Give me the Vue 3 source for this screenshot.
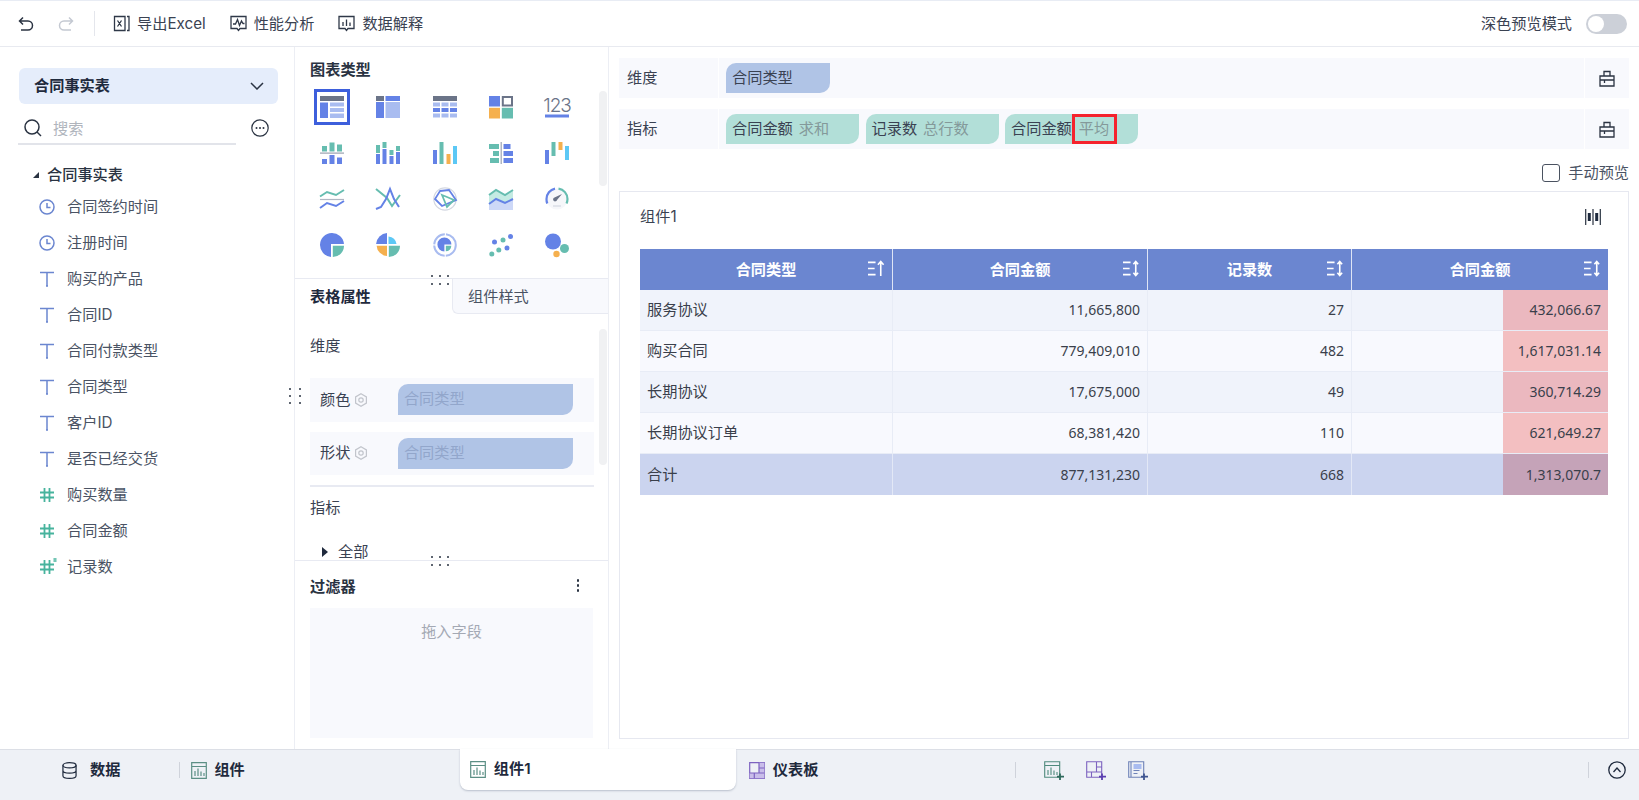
<script setup>
const fields = [
  { type: 'time', name: '合同签约时间' },
  { type: 'time', name: '注册时间' },
  { type: 'text', name: '购买的产品' },
  { type: 'text', name: '合同ID' },
  { type: 'text', name: '合同付款类型' },
  { type: 'text', name: '合同类型' },
  { type: 'text', name: '客户ID' },
  { type: 'text', name: '是否已经交货' },
  { type: 'num', name: '购买数量' },
  { type: 'num', name: '合同金额' },
  { type: 'calc', name: '记录数' }
]

const columns = [
  { name: '合同类型', sort: 'up' },
  { name: '合同金额', sort: 'both' },
  { name: '记录数', sort: 'both' },
  { name: '合同金额', sort: 'both' }
]

const rows = [
  ['服务协议', '11,665,800', '27', '432,066.67'],
  ['购买合同', '779,409,010', '482', '1,617,031.14'],
  ['长期协议', '17,675,000', '49', '360,714.29'],
  ['长期协议订单', '68,381,420', '110', '621,649.27']
]
const total = ['合计', '877,131,230', '668', '1,313,070.7']
</script>

<template>
  <div class="app">
    <header class="topbar">
      <svg class="ic16 undo" viewBox="0 0 16 16"><path d="M5 1.5 1.5 5 5 8.5M2 5h8a4.5 4.5 0 0 1 0 9H3" /></svg>
      <svg class="ic16 redo" viewBox="0 0 16 16"><path d="M11 1.5 14.5 5 11 8.5M14 5H6a4.5 4.5 0 0 0 0 9h7" /></svg>
      <span class="vline"></span>
      <button class="tool">
        <svg class="ic17" viewBox="0 0 17 17"><path d="M12 1.5H1.5v14H12V1.5ZM4.5 5.5l4 6M8.5 5.5l-4 6M14 1.5h2v14h-2" /></svg>
        导出Excel
      </button>
      <button class="tool">
        <svg class="ic17" viewBox="0 0 17 17"><path d="M1 1.5h15v12H10l-1.5 2-1.5-2H1zM3 9h2.5l2-4.500 2 6 2-4.500L13 8.500h1.500" /></svg>
        性能分析
      </button>
      <button class="tool">
        <svg class="ic17" viewBox="0 0 17 17"><path d="M1 1.5h15v12H10l-1.5 2-1.5-2H1zM5 7v4M8.5 4.5V11M12 7.5V11" /></svg>
        数据解释
      </button>
      <div class="dark-mode">
        <span>深色预览模式</span>
        <span class="toggle"><i></i></span>
      </div>
    </header>

    <main class="main">
      <aside class="left">
        <div class="table-select">
          <span>合同事实表</span>
          <svg class="chev" viewBox="0 0 14 8"><path d="M1 1l6 6 6-6" /></svg>
        </div>
        <div class="search-row">
          <div class="search">
            <svg class="search-ic" viewBox="0 0 18 18"><circle cx="8" cy="8" r="7" /><path d="M13 13l4 4" /></svg>
            <span>搜索</span>
          </div>
          <svg class="more" viewBox="0 0 18 18">
            <circle class="ring" cx="9" cy="9" r="8.2" />
            <circle cx="5.5" cy="9" r="1" /><circle cx="9" cy="9" r="1" /><circle cx="12.5" cy="9" r="1" />
          </svg>
        </div>
        <div class="tree-root"><i class="tri-corner"></i>合同事实表</div>
        <ul class="fields">
          <li v-for="f in fields" :key="f.name">
            <svg v-if="f.type === 'time'" class="fic blue" viewBox="0 0 16 16"><circle cx="8" cy="8" r="7" /><path d="M8 4v4.500h3.500" /></svg>
            <svg v-else-if="f.type === 'text'" class="fic blue" viewBox="0 0 16 16"><path d="M1 1.5h14M8 1.5V15M7 15h2" /></svg>
            <svg v-else class="fic green" viewBox="0 0 16 16">
              <path d="M1 5.5h14M1 10.5h14M5.5 1v14M10.5 1v14" />
              <path v-if="f.type === 'calc'" class="star" d="M16 -1v4M14.2 0h3.600M14.2 2h3.600" />
            </svg>
            {{ f.name }}
          </li>
        </ul>
      </aside>

      <section class="mid">
        <i class="col-dots"><b></b><b></b><b></b><b></b><b></b><b></b></i>

        <div class="chart-types">
          <h3>图表类型</h3>
          <div class="chart-grid">
            <div class="cell active">
              <svg viewBox="0 0 24 24"><rect y="1" width="24" height="5" fill="#6b7488" /><rect y="7.5" width="8" height="15.5" fill="#6482e6" /><rect x="10" y="7.5" width="14" height="4" fill="#a9bcf0" /><rect x="10" y="13" width="14" height="4" fill="#a9bcf0" /><rect x="10" y="18.5" width="14" height="4.5" fill="#a9bcf0" /></svg>
            </div>
            <div class="cell">
              <svg viewBox="0 0 24 24"><rect y="1" width="8" height="5" fill="#6b7488" /><rect x="9.5" y="1" width="14.5" height="5" fill="#6482e6" /><rect y="7" width="8" height="16" fill="#6482e6" /><rect x="9.5" y="7" width="14.5" height="16" fill="#a9bcf0" /></svg>
            </div>
            <div class="cell">
              <svg viewBox="0 0 24 24"><rect y="1" width="24" height="5" fill="#6b7488" /><path fill="#a9bcf0" d="M0 7.5h7v4H0zM8.5 7.5h7v4h-7zM17 7.5h7v4h-7zM0 18.5h7v4H0zM8.5 18.5h7v4h-7zM17 18.5h7v4h-7z" /><path fill="#6482e6" d="M0 13h7v4H0zM8.5 13h7v4h-7zM17 13h7v4h-7z" /></svg>
            </div>
            <div class="cell">
              <svg viewBox="0 0 24 24"><rect y="1" width="11" height="10.5" fill="#6482e6" /><rect x="13.8" y="2" width="9.2" height="8.5" fill="none" stroke="#6b7488" stroke-width="2" /><rect y="12.8" width="11" height="10.7" fill="#f5b04e" /><rect x="12.8" y="12.8" width="11.2" height="10.7" fill="#66bdb0" /></svg>
            </div>
            <div class="cell">
              <svg viewBox="0 0 24 24"><text x="12" y="16.5" text-anchor="middle" class="num-glyph">123</text><rect y="19.5" width="24" height="3" fill="#6482e6" /></svg>
            </div>

            <div class="cell">
              <svg viewBox="0 0 24 24"><path fill="#66bdb0" d="M2 5h5v5.500H2zM9.5 1.5h5v9h-5zM17 3.5h5v7h-5z" /><rect y="11.5" width="24" height="1.2" fill="#9aa1b0" /><path fill="#6482e6" d="M2 18h5v5H2zM9.5 14h5v9h-5zM17 16.5h5V23h-5z" /></svg>
            </div>
            <div class="cell">
              <svg viewBox="0 0 24 24"><path fill="#66bdb0" d="M0 4h4v8H0zM6.5 1h4v6h-4zM13.5 9h4v5h-4zM20 5h4v5h-4z" /><path fill="#6482e6" d="M0 13h4v10H0zM6.5 8h4v15h-4zM13.5 15h4v8h-4zM20 11h4v12h-4z" /></svg>
            </div>
            <div class="cell">
              <svg viewBox="0 0 24 24"><rect y="9" width="4" height="14" fill="#6482e6" /><rect x="6.5" y="1" width="4" height="22" fill="#66bdb0" /><rect x="13.5" y="13" width="4" height="10" fill="#f5b04e" /><rect x="20" y="5" width="4" height="18" fill="#5cc8f5" /></svg>
            </div>
            <div class="cell">
              <svg viewBox="0 0 24 24"><path fill="#66bdb0" d="M0 3h10v5H0zM4 10h6v5H4zM1 17h9v5H1z" /><rect x="11.5" y="1" width="1.5" height="22" fill="#b0b6c2" /><path fill="#6482e6" d="M14.5 3h7v5h-7zM14.5 10H24v5h-9.500zM14.5 17H24v5h-9.500z" /></svg>
            </div>
            <div class="cell">
              <svg viewBox="0 0 24 24"><rect y="9" width="4" height="14" fill="#6482e6" /><rect x="6.5" y="1" width="4" height="14" fill="#66bdb0" /><rect x="13.5" y="1" width="4" height="8" fill="#f5b04e" /><rect x="20" y="5" width="4" height="14" fill="#5cc8f5" /></svg>
            </div>

            <div class="cell">
              <svg viewBox="0 0 24 24" fill="none" stroke-width="2"><path stroke="#66bdb0" d="M0 9.5 7 5l9 3 8-5" /><path stroke="#b0b6c2" stroke-width="1.2" d="M0 12.5h24" /><path stroke="#6482e6" d="M0 21l7-5 9 3 8-5" /></svg>
            </div>
            <div class="cell">
              <svg viewBox="0 0 24 24" fill="none" stroke-width="2"><path stroke="#66bdb0" d="M0 2l11 9 5 8 8-11" /><path stroke="#6482e6" d="M0 22l5-2 5-8 4-10 4 10 5 8" /></svg>
            </div>
            <div class="cell">
              <svg viewBox="0 0 24 24" fill="none"><circle cx="12" cy="12" r="11.2" stroke="#d4d8e2" stroke-width="1.2" /><path stroke="#6482e6" stroke-width="1.8" d="M7 4l9-1 7 10-14 6-7-7z" /><path stroke="#66bdb0" stroke-width="1.8" d="M9 8l5 2 7 3-7 7z" /></svg>
            </div>
            <div class="cell">
              <svg viewBox="0 0 24 24"><path fill="#c4ebe3" d="M0 8l7-5 9 5 8-5v10l-8 4-9-4-7 5z" /><path fill="#cdd8f7" d="M0 18l7-5 9 3 8-4v11H0z" /><path fill="none" stroke="#66bdb0" stroke-width="2" d="M0 8l7-5 9 5 8-5" /><path fill="none" stroke="#6482e6" stroke-width="2" d="M0 17l7-5 9 4 8-4" /></svg>
            </div>
            <div class="cell">
              <svg viewBox="0 0 24 24" fill="none" stroke-width="2.2"><circle cx="12" cy="12" r="10.5" fill="#f6f7fa" stroke="none" /><path stroke="#6482e6" d="M2.3 16.5A10.5 10.5 0 0 1 1.500 12 10.5 10.5 0 0 1 10 1.700" /><path stroke="#66bdb0" d="M13.500 1.600A10.5 10.500 0 0 1 22.500 12a10.500 10.500 0 0 1-1 4.500" /><path fill="#6b7488" stroke="none" d="M17 7l-5 6a2 2 0 1 1-2.500-2.500z" /><path stroke="#d4d8e2" stroke-width="1.2" d="M8 19h8" /></svg>
            </div>

            <div class="cell">
              <svg viewBox="0 0 24 24"><path fill="#6482e6" d="M11 11h12.950A12 12 0 1 0 11 23.950z" /><path fill="#66bdb0" d="M12.800 12.800H24A11.200 11.200 0 0 1 12.800 24z" /></svg>
            </div>
            <div class="cell">
              <svg viewBox="0 0 24 24"><path fill="#6482e6" d="M11 11V.05A12 12 0 0 0 .05 11z" /><path fill="#5cc8f5" d="M12.500 11V3.500A9 9 0 0 1 20.500 11z" /><path fill="#f5b04e" d="M11 12.800V23A11 11 0 0 1 .6 12.800z" /><path fill="#66bdb0" d="M12.800 12.800H24A11.200 11.200 0 0 1 12.800 24z" /></svg>
            </div>
            <div class="cell">
              <svg viewBox="0 0 24 24" fill="none"><circle cx="12" cy="12" r="10.8" stroke="#a9bcf0" stroke-width="2" stroke-dasharray="16 1.2" /><path fill="#6482e6" d="M11.400 11.400h7A7 7 0 1 0 11.400 18.500z" /><path fill="#66bdb0" d="M12.800 12.800h5.500a5.500 5.500 0 0 1-5.500 5.500z" /></svg>
            </div>
            <div class="cell">
              <svg viewBox="0 0 24 24"><g fill="#6482e6"><circle cx="5.5" cy="9" r="2.5" /><circle cx="18" cy="15" r="2.5" /><circle cx="21.5" cy="3.5" r="2.5" /></g><g fill="#66bdb0"><circle cx="14" cy="7" r="2.5" /><circle cx="9.8" cy="17" r="2.5" /><circle cx="2.8" cy="21" r="2.5" /></g></svg>
            </div>
            <div class="cell">
              <svg viewBox="0 0 24 24"><circle cx="8" cy="8.5" r="8" fill="#6482e6" /><circle cx="19.5" cy="15.5" r="4.5" fill="#66bdb0" /><circle cx="11.5" cy="21" r="3.2" fill="#f5b04e" /></svg>
            </div>
          </div>
          <div class="sbar sbar-a"></div>
        </div>

        <div class="props">
          <i class="row-dots top"><b></b><b></b><b></b><b></b><b></b><b></b></i>
          <div class="tabs">
            <span class="tab active">表格属性</span>
            <span class="tab">组件样式</span>
          </div>
          <div class="sbar sbar-b"></div>
          <div class="prop-body">
            <div class="prop-title first">维度</div>
            <div class="prop-row">
              <label>颜色</label>
              <svg class="gear" viewBox="0 0 14 14"><path d="M7 .8l5.400 3.100v6.200L7 13.200l-5.400-3.100V3.900z" /><circle cx="7" cy="7" r="2.2" /></svg>
              <span class="pill-off">合同类型</span>
            </div>
            <div class="prop-row">
              <label>形状</label>
              <svg class="gear" viewBox="0 0 14 14"><path d="M7 .8l5.400 3.100v6.200L7 13.200l-5.400-3.100V3.900z" /><circle cx="7" cy="7" r="2.2" /></svg>
              <span class="pill-off">合同类型</span>
            </div>
            <hr />
            <div class="prop-title">指标</div>
            <div class="all"><i class="tri-right"></i>全部</div>
          </div>
        </div>

        <div class="filter">
          <i class="row-dots bottom"><b></b><b></b><b></b><b></b><b></b><b></b></i>
          <div class="filter-head">
            <span>过滤器</span>
            <span class="kebab"><b></b><b></b><b></b></span>
          </div>
          <div class="drop">拖入字段</div>
        </div>
      </section>

      <section class="right">
        <div class="shelf">
          <span class="shelf-label">维度</span>
          <div class="shelf-body">
            <span class="pill dim">合同类型</span>
          </div>
          <span class="shelf-btn">
            <svg class="case" viewBox="0 0 16 16"><path d="M1 5.5h14v10H1zM5 5.500V1h6v4.500M1 9.500h14M5.500 9.500V12.500" /></svg>
          </span>
        </div>
        <div class="shelf">
          <span class="shelf-label">指标</span>
          <div class="shelf-body">
            <span class="pill mea">合同金额<em>求和</em></span>
            <span class="pill mea">记录数<em>总行数</em></span>
            <span class="pill mea last">合同金额<em>平均</em><i class="mark"></i></span>
          </div>
          <span class="shelf-btn">
            <svg class="case" viewBox="0 0 16 16"><path d="M1 5.5h14v10H1zM5 5.500V1h6v4.500M1 9.500h14M5.500 9.500V12.500" /></svg>
          </span>
        </div>

        <div class="manual">
          <i class="check"></i>
          手动预览
        </div>

        <div class="widget">
          <div class="widget-head">
            <span>组件1</span>
            <svg class="bars" viewBox="0 0 16 16"><path d="M.7 0v16M15.300 0v16M8 0v16" /><path class="thick" d="M4.300 4v8M11.700 4v8" /></svg>
          </div>
          <table class="grid">
            <colgroup>
              <col class="c1" />
              <col class="c2" />
              <col class="c3" />
              <col />
            </colgroup>
            <thead>
              <tr>
                <th v-for="(c, i) in columns" :key="i">
                  {{ c.name }}
                  <svg class="sort" viewBox="0 0 18 18">
                    <path d="M0 2.5h8M0 9h7M0 15.5h8" />
                    <path v-if="c.sort === 'up'" d="M13.5 17V2M10.5 5l3-3.500 3 3.500" />
                    <path v-else d="M13.5 3v12M11 4.500l2.500-3 2.500 3M11 13.500l2.500 3 2.500-3" />
                  </svg>
                </th>
              </tr>
            </thead>
            <tbody>
              <tr v-for="r in rows" :key="r[0]">
                <td>{{ r[0] }}</td>
                <td class="n">{{ r[1] }}</td>
                <td class="n">{{ r[2] }}</td>
                <td class="n heat"><i></i><span>{{ r[3] }}</span></td>
              </tr>
              <tr class="sum">
                <td>{{ total[0] }}</td>
                <td class="n">{{ total[1] }}</td>
                <td class="n">{{ total[2] }}</td>
                <td class="n heat"><i></i><span>{{ total[3] }}</span></td>
              </tr>
            </tbody>
          </table>
        </div>
      </section>
    </main>

    <footer class="bottombar">
      <div class="b-data">
        <svg class="db" viewBox="0 0 16 18"><ellipse cx="8" cy="3.5" rx="7" ry="2.800" /><path d="M1 3.500v11c0 1.500 3 2.800 7 2.800s7-1.300 7-2.800v-11M1 9c0 1.500 3 2.800 7 2.800S15 10.500 15 9" /></svg>
        数据
      </div>
      <i class="b-sep"></i>
      <div class="b-item">
        <svg class="sheet green-s" viewBox="0 0 16 17"><path d="M.7.7h14.600v15.600H.7zM.7 4.500h14.600M4 14V9M7 14V6.500M10 14V9.500M13 14v-3" /></svg>
        组件
      </div>
      <div class="b-tab">
        <svg class="sheet green-s" viewBox="0 0 16 17"><path d="M.7.7h14.600v15.600H.7zM.7 4.500h14.600M4 14V9M7 14V6.500M10 14V9.500M13 14v-3" /></svg>
        组件1
      </div>
      <div class="b-item dash">
        <svg class="sheet purple-s" viewBox="0 0 16 17"><path d="M.7.7h14.600v15.600H.7z" /><path class="fill" d="M10 .7h5.300v15.600H.7V11H10z" /><path d="M10 .7V11M.7 11h14.600M10 6h5.300M5.300 11v5.300" /></svg>
        仪表板
      </div>
      <i class="b-sep s2"></i>
      <svg class="add" viewBox="0 0 20 19"><path class="g" d="M.7.7h15v15.600H.7zM.7 4.500h15M4 14V9M7 14V6.500M10 14V9.500M13 14v-3" /><path class="g p" d="M16 12.500V19M13 15.700h7" /></svg>
      <svg class="add" viewBox="0 0 20 19"><path class="v" d="M.7.7h15v15.600H.7zM10.500.7V11M.7 11h15M10.500 6h5.200M5.500 11v5.300" /><path class="v p" d="M16 12.500V19M13 15.700h7" /></svg>
      <svg class="add" viewBox="0 0 20 19"><path class="b" d="M.7.7h15v15.600H.7zM3 .7v15.600M5.500 9.500h6M5.500 12.500h4" /><rect x="5.5" y="3" width="8" height="5" fill="#a9bcf0" /><path class="b p" d="M16 12.500V19M13 15.700h7" /></svg>
      <i class="b-sep s3"></i>
      <svg class="collapse" viewBox="0 0 18 18"><circle cx="9" cy="9" r="8.2" /><path d="M5.5 11 9 7l3.500 4" /></svg>
    </footer>
  </div>
</template>

<style scoped>
.app {
  width: 1639px;
  height: 800px;
  display: flex;
  flex-direction: column;
  overflow: hidden;
  background: #fff;
  color: #3a4252;
  font: 15.2px/20px Inter, "Noto Sans CJK SC", sans-serif;
}

svg {
  display: block;
  flex: none;
  fill: none;
}

/* top bar */
.topbar {
  height: 47px;
  box-sizing: border-box;
  flex: none;
  display: flex;
  align-items: center;
  padding-left: 18px;
  border-top: 1px solid #e8ecf4;
  border-bottom: 1.5px solid #e8eaf0;
}
.ic16 {
  width: 16px;
  height: 16px;
  stroke-width: 1.5;
}
.undo { stroke: #2a3342; }
.redo {
  stroke: #c4c9d2;
  margin-left: 24px;
}
.vline {
  width: 1px;
  height: 25px;
  background: #e4e6ec;
  margin: 0 18px 0 20px;
}
.tool {
  display: flex;
  align-items: center;
  gap: 7px;
  margin-right: 24px;
  padding: 0;
  border: 0;
  background: none;
  color: #3a4252;
  font: inherit;
}
.ic17 {
  width: 17px;
  height: 17px;
  stroke: #2f3848;
  stroke-width: 1.3;
}
.dark-mode {
  margin-left: auto;
  display: flex;
  align-items: center;
  gap: 14px;
  padding-right: 12px;
}
.toggle {
  width: 41px;
  height: 20px;
  border-radius: 10px;
  background: #ccd0d8;
  padding: 2px;
  box-sizing: border-box;
}
.toggle i {
  display: block;
  width: 16px;
  height: 16px;
  border-radius: 50%;
  background: #fff;
}

.main {
  flex: 1;
  display: flex;
  min-height: 0;
}

/* left field list */
.left {
  width: 294px;
  flex: none;
  box-sizing: border-box;
  padding: 21px 16px 0 19px;
}
.table-select {
  width: 259px;
  height: 36px;
  box-sizing: border-box;
  display: flex;
  align-items: center;
  justify-content: space-between;
  padding: 0 14px 0 15px;
  border-radius: 6px;
  background: #e5edfb;
  color: #1f2a3d;
  font-weight: 600;
}
.chev {
  width: 14px;
  height: 8px;
  stroke: #2a3342;
  stroke-width: 1.5;
}
.search-row {
  display: flex;
  align-items: flex-start;
  margin-top: 15px;
}
.search {
  width: 218px;
  height: 26px;
  margin-left: -1px;
  display: flex;
  align-items: flex-start;
  gap: 11px;
  padding-left: 6px;
  box-sizing: border-box;
  border-bottom: 2px solid #e2e4ea;
  color: #b0b5bd;
}
.search-ic {
  width: 18px;
  height: 18px;
  stroke: #2a3342;
  stroke-width: 1.5;
}
.more {
  width: 18px;
  height: 18px;
  margin-left: 15px;
  fill: #2a3342;
}
.more .ring {
  fill: none;
  stroke: #2a3342;
  stroke-width: 1.2;
}
.tree-root {
  display: flex;
  align-items: center;
  gap: 8px;
  margin: 20px 0 0 14px;
  color: #2a3342;
  font-weight: 500;
}
.tri-corner {
  width: 0;
  height: 0;
  border-left: 6px solid transparent;
  border-bottom: 6px solid #2a3342;
}
.fields {
  list-style: none;
  margin: 4px 0 0;
  padding: 0;
}
.fields li {
  height: 36px;
  display: flex;
  align-items: center;
  gap: 12px;
  padding-left: 20px;
  color: #4a5364;
}
.fic {
  width: 16px;
  height: 16px;
  stroke-width: 1.5;
  overflow: visible;
}
.fic.blue { stroke: #6b86d0; }
.fic.green {
  stroke: #47b39d;
  stroke-width: 1.8;
}
.fic .star {
  stroke-width: 1;
}

/* middle column */
.mid {
  position: relative;
  width: 315px;
  flex: none;
  display: flex;
  flex-direction: column;
  box-sizing: border-box;
  border-left: 1.5px solid #eceef4;
  border-right: 1.5px solid #eceef4;
}
.col-dots {
  position: absolute;
  left: -6px;
  top: 341px;
  width: 12px;
  display: grid;
  grid-template-columns: 2px 2px;
  justify-content: space-between;
  row-gap: 5px;
  z-index: 2;
}
.col-dots b,
.row-dots b {
  width: 2px;
  height: 2px;
  border-radius: 50%;
  background: #2a3342;
}
.row-dots {
  position: absolute;
  left: 136px;
  width: 18px;
  display: grid;
  grid-template-columns: repeat(3, 2px);
  justify-content: space-between;
  row-gap: 6px;
  z-index: 2;
}
.row-dots.top { top: -4px; }
.row-dots.bottom { top: -5px; }

.chart-types {
  position: relative;
  height: 231px;
  flex: none;
  box-sizing: border-box;
  padding: 13px 0 0 15px;
}
.chart-types h3 {
  margin: 0;
  font-size: 15.2px;
  font-weight: 600;
  line-height: 20px;
  color: #2a3342;
}
.chart-grid {
  display: grid;
  grid-template-columns: repeat(5, 56.3px);
  grid-auto-rows: 46px;
  margin: 4px 0 0 -6px;
}
.cell {
  display: flex;
  align-items: center;
  justify-content: center;
}
.cell svg {
  width: 24px;
  height: 24px;
  overflow: visible;
}
.cell.active svg {
  box-sizing: content-box;
  padding: 3px;
  border: 3px solid #3d5fdc;
}
.num-glyph {
  fill: #6b7488;
  font: 300 19px Inter, sans-serif;
  letter-spacing: -1px;
}
.sbar {
  position: absolute;
  right: 1px;
  width: 8px;
  border-radius: 4px;
  background: #f0f1f3;
}
.sbar-a {
  top: 44px;
  height: 95px;
}
.sbar-b {
  top: 50px;
  height: 136px;
}

.props {
  position: relative;
  height: 282px;
  flex: none;
  box-sizing: border-box;
  border-top: 1.5px solid #e8eaf2;
}
.tabs {
  display: flex;
  height: 35px;
}
.tab {
  flex: 1;
  box-sizing: border-box;
  padding: 8px 0 0 15px;
  color: #4a5364;
}
.tab.active {
  flex: none;
  width: 157px;
  color: #1f2a3d;
  font-weight: 600;
}
.tab:not(.active) {
  padding-left: 15px;
  background: #f8f9fd;
  border-left: 1.5px solid #e8eaf2;
  border-bottom: 1.5px solid #e8eaf2;
  border-bottom-left-radius: 6px;
}
.prop-body {
  padding: 0 14px 0 15px;
}
.prop-title {
  margin-top: 11px;
  color: #3a4252;
}
.prop-title.first {
  margin-top: 22px;
}
.prop-row {
  display: flex;
  align-items: center;
  height: 43.5px;
  margin-top: 10px;
  padding-left: 10px;
  background: #f8f9fd;
}
.prop-title.first + .prop-row {
  margin-top: 22px;
}
.gear {
  width: 14px;
  height: 14px;
  margin-left: 4px;
  stroke: #c2c5cc;
  stroke-width: 1.2;
}
.pill-off {
  width: 175px;
  height: 31px;
  margin-left: 29.5px;
  box-sizing: border-box;
  padding: 5px 6px;
  background: #b0c4e6;
  border-radius: 10px 0 10px 0;
  color: #92a6cb;
}
hr {
  height: 1.5px;
  margin: 10px 0 0;
  border: 0;
  background: #e8eaf2;
}
.all {
  display: flex;
  align-items: center;
  gap: 10px;
  margin: 24px 0 0 12px;
}
.tri-right {
  width: 0;
  height: 0;
  border-top: 5px solid transparent;
  border-bottom: 5px solid transparent;
  border-left: 6px solid #1f2a3d;
}

.filter {
  position: relative;
  flex: 1;
  background: #fff;
  box-sizing: border-box;
  padding: 16px 15px 0;
  border-top: 1.5px solid #e8eaf2;
}
.filter-head {
  display: flex;
  align-items: center;
  justify-content: space-between;
  color: #2a3342;
  font-weight: 600;
}
.kebab {
  display: flex;
  flex-direction: column;
  gap: 2.5px;
  margin: -3px 14px 0 0;
}
.kebab b {
  width: 2.5px;
  height: 2.5px;
  border-radius: 50%;
  background: #2a3342;
}
.drop {
  height: 130px;
  margin-top: 11px;
  padding-top: 14px;
  box-sizing: border-box;
  background: #f8f9fd;
  text-align: center;
  color: #a4a9b4;
}

/* right column */
.right {
  flex: 1;
  min-width: 0;
  box-sizing: border-box;
  padding: 11px 10px 0 10px;
}
.shelf {
  height: 40px;
  display: flex;
  align-items: center;
  margin-bottom: 11px;
  background: #f8f9fd;
}
.shelf-label {
  width: 100px;
  flex: none;
  box-sizing: border-box;
  padding-left: 8px;
  height: 100%;
  line-height: 40px;
  border-right: 1.5px solid #fff;
}
.shelf-body {
  flex: 1;
  height: 100%;
  display: flex;
  align-items: center;
  gap: 6.5px;
  padding-left: 7px;
}
.pill {
  position: relative;
  width: 133px;
  height: 30px;
  box-sizing: border-box;
  padding: 5px 6px;
  flex: none;
  border-radius: 10px 0 10px 0;
  color: #3a4252;
}
.pill.dim {
  width: 104px;
  background: #b0c4e6;
}
.pill.mea {
  background: #b2dfd8;
}
.pill em {
  margin-left: 6px;
  font-style: normal;
  color: #84999a;
}
.pill.last em {
  margin-left: 7px;
}
.mark {
  position: absolute;
  left: 67px;
  top: 0;
  width: 45px;
  height: 30px;
  box-sizing: border-box;
  border: 3px solid #f5222d;
}
.shelf-btn {
  width: 44px;
  height: 100%;
  flex: none;
  display: flex;
  align-items: center;
  justify-content: center;
  border-left: 1.5px solid #fff;
}
.case {
  width: 16px;
  height: 17px;
  stroke: #2a3342;
  stroke-width: 1.3;
}
.manual {
  display: flex;
  align-items: center;
  justify-content: flex-end;
  gap: 8px;
  height: 20px;
  margin-top: 14px;
  color: #4a5364;
}
.check {
  width: 18px;
  height: 18px;
  box-sizing: border-box;
  border: 1.5px solid #4a5260;
  border-radius: 3px;
}

.widget {
  height: 548px;
  margin-top: 8px;
  box-sizing: border-box;
  padding: 0 20px;
  border: 1.5px solid #e6e8f0;
  position: relative;
}
.widget-head {
  display: flex;
  align-items: center;
  justify-content: space-between;
  height: 50px;
  padding: 0 7px 0 0;
  color: #3a4252;
}
.bars {
  width: 16px;
  height: 16px;
  stroke: #2a3342;
  stroke-width: 1.2;
}
.bars .thick {
  stroke: #1f2a3d;
  stroke-width: 3;
}
.grid {
  width: 968px;
  table-layout: fixed;
  border-collapse: separate;
  border-spacing: 0;
  margin-top: 7px;
}
.c1 { width: 253px; }
.c2 { width: 255px; }
.c3 { width: 204px; }
th {
  position: relative;
  height: 41px;
  padding: 0;
  box-sizing: border-box;
  background: #6b86d0;
  color: #fff;
  font-weight: 700;
  border-right: 1.5px solid #dfe5f5;
}
th:last-child,
td:last-child {
  border-right: 0;
}
.sort {
  position: absolute;
  right: 7px;
  top: 11px;
  width: 17px;
  height: 17px;
  stroke: #fff;
  stroke-width: 1.7;
}
td {
  position: relative;
  height: 41px;
  box-sizing: border-box;
  padding: 0 7px;
  color: #3a3f4b;
  background: #f8f9fe;
  border-right: 1.5px solid #e8ecf6;
  border-bottom: 1.5px solid #e8ecf6;
}
tbody tr:nth-child(odd) td {
  background: #f0f3fb;
}
tbody tr.sum td {
  background: #cbd4ef;
  border-bottom: 0;
  border-right-color: #e3e8f6;
}
td.n {
  text-align: right;
  font-family: "Noto Sans", sans-serif;
  font-size: 14px;
}
.heat i {
  position: absolute;
  right: 0;
  top: 0;
  bottom: 0;
  width: 105px;
  background: #f3bfc1;
}
tbody tr:nth-child(odd) .heat i {
  background: #ebb8bf;
}
tbody tr.sum .heat i {
  background: #c5a3b8;
}
.heat span {
  position: relative;
}

/* bottom bar */
.bottombar {
  height: 51px;
  flex: none;
  position: relative;
  display: flex;
  align-items: center;
  box-sizing: border-box;
  padding-bottom: 10px;
  background: #eef1f6;
  border-top: 1.5px solid #dcdfe6;
  color: #1f2a3d;
  font-weight: 600;
}
.b-data {
  display: flex;
  align-items: center;
  gap: 13px;
  margin-left: 62px;
}
.db {
  width: 15px;
  height: 17px;
  stroke: #1f2a3d;
  stroke-width: 1.3;
}
.b-sep {
  width: 1px;
  height: 16px;
  background: #cfd3db;
  margin-left: 59px;
}
.b-item {
  display: flex;
  align-items: center;
  gap: 7px;
  margin-left: 11px;
}
.sheet {
  width: 16px;
  height: 17px;
  stroke-width: 1.2;
}
.green-s { stroke: #5c8f85; }
.purple-s { stroke: #7d63c0; }
.purple-s .fill {
  fill: #c9bdea;
  stroke: none;
}
.b-tab {
  width: 276px;
  height: 41px;
  box-sizing: border-box;
  margin: -1.5px 0 0 215px;
  align-self: flex-start;
  display: flex;
  align-items: center;
  gap: 8px;
  padding: 0 0 0 10px;
  background: #fff;
  border-radius: 0 0 8px 8px;
  box-shadow: 0 1px 2px rgba(120, 130, 150, 0.45);
}
.b-item.dash {
  margin-left: 13px;
  gap: 8px;
}
.s2 {
  margin-left: 197px;
}
.add {
  width: 20px;
  height: 19px;
  stroke-width: 1.1;
}
.b-sep.s2 + .add {
  margin-left: 28px;
}
.add + .add {
  margin-left: 22px;
}
.add .g { stroke: #4f8a7d; }
.add .v { stroke: #7d63c0; }
.add .b { stroke: #6f83b8; }
.add .p { stroke-width: 1.8; }
.add .g.p { stroke: #2f6a5d; }
.add .v.p { stroke: #5a3fb0; }
.add .b.p { stroke: #3f5590; }
.s3 {
  margin-left: 440px;
}
.collapse {
  width: 18px;
  height: 18px;
  margin-left: 19px;
  stroke: #1f2a3d;
  stroke-width: 1.3;
}
</style>

<style>
html,
body {
  margin: 0;
  background: #fff;
  overflow: hidden;
}
</style>
